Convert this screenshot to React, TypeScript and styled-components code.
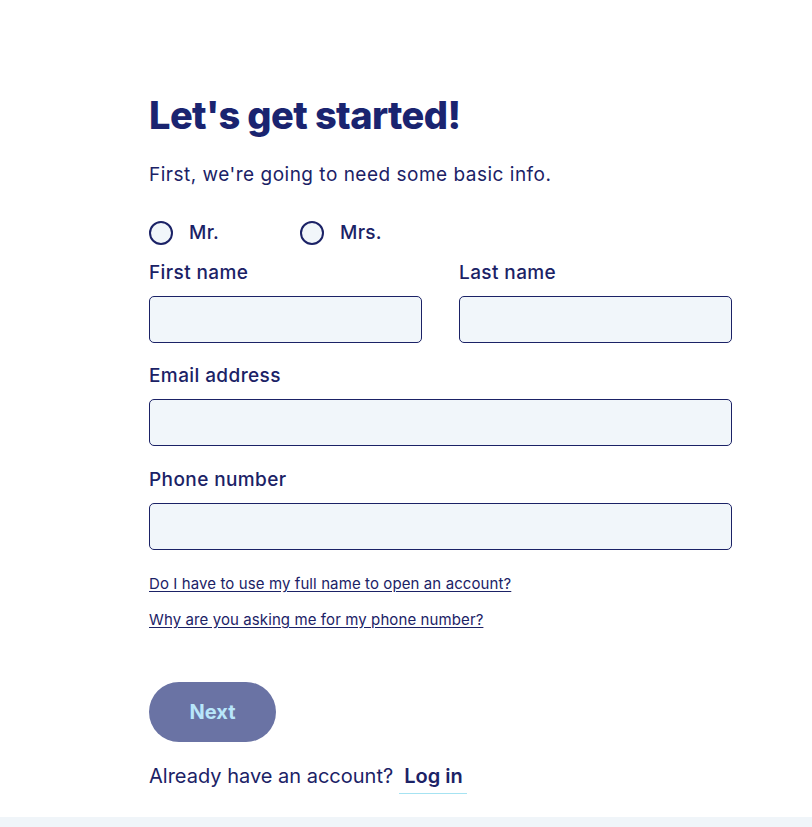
import React, { useState } from "react";
import styled, { createGlobalStyle } from "styled-components";

const GlobalStyle = createGlobalStyle`
  html, body {
    margin: 0;
    padding: 0;
    background: #ffffff;
  }
  body {
    font-family: "Inter", "Liberation Sans", sans-serif;
    color: #1b2266;
  }
`;

const App = () => {
  const [title, setTitle] = useState("");

  return (
    <>
      <GlobalStyle />
      <Page>
        <Form>
          <Heading>Let's get started!</Heading>
          <Intro>First, we're going to need some basic info.</Intro>

          <RadioRow>
            <RadioLabel $width={151}>
              <RadioCircle $checked={title === "mr"} onClick={() => setTitle("mr")} />
              Mr.
            </RadioLabel>
            <RadioLabel>
              <RadioCircle $checked={title === "mrs"} onClick={() => setTitle("mrs")} />
              Mrs.
            </RadioLabel>
          </RadioRow>

          <TwoCols>
            <Field>
              <Label>First name</Label>
              <Input />
            </Field>
            <Field>
              <Label>Last name</Label>
              <Input />
            </Field>
          </TwoCols>

          <Field $gap={20}>
            <Label>Email address</Label>
            <Input />
          </Field>

          <Field $gap={21}>
            <Label>Phone number</Label>
            <Input />
          </Field>

          <Links>
            <HelpLink href="#">Do I have to use my full name to open an account?</HelpLink>
            <HelpLink href="#">Why are you asking me for my phone number?</HelpLink>
          </Links>

          <NextButton>Next</NextButton>

          <LoginRow>
            Already have an account?
            <LoginLink href="#">Log in</LoginLink>
          </LoginRow>
        </Form>
        <BottomBand />
      </Page>
    </>
  );
};

const Page = styled.div`
  width: 100%;
  min-height: 827px;
  display: flex;
  flex-direction: column;
`;

const Form = styled.div`
  width: 583px;
  padding: 92px 0 0 149px;
  display: flex;
  flex-direction: column;
  flex: 1;
`;

const Heading = styled.h1`
  margin: 0;
  font-size: 38px;
  line-height: 46px;
  font-weight: 800;
  letter-spacing: -0.6px;
  color: #1a2470;
`;

const Intro = styled.p`
  margin: 24px 0 0;
  font-size: 19px;
  line-height: 26px;
  font-weight: 400;
  letter-spacing: 0.5px;
  color: #1b2266;
`;

const RadioRow = styled.div`
  display: flex;
  align-items: center;
  margin-top: 32px;
`;

const RadioLabel = styled.label<{ $width?: number }>`
  display: flex;
  align-items: center;
  gap: 16px;
  width: ${(p) => (p.$width ? `${p.$width}px` : "auto")};
  font-size: 19px;
  font-weight: 500;
  line-height: 26px;
  letter-spacing: 0.3px;
  color: #1b2266;
  cursor: pointer;
`;

const RadioCircle = styled.span<{ $checked: boolean }>`
  width: 20px;
  height: 20px;
  border-radius: 50%;
  border: 2px solid #1b2266;
  background: ${(p) => (p.$checked ? "#1b2266" : "#f1f6fa")};
  box-shadow: ${(p) => (p.$checked ? "inset 0 0 0 4px #f1f6fa" : "none")};
`;

const TwoCols = styled.div`
  display: grid;
  grid-template-columns: 1fr 1fr;
  column-gap: 37px;
`;

const Field = styled.div<{ $gap?: number }>`
  display: flex;
  flex-direction: column;
  margin-top: ${(p) => p.$gap ?? 14}px;
`;

const Label = styled.div`
  font-size: 19px;
  line-height: 26px;
  font-weight: 500;
  letter-spacing: 0.4px;
  color: #1b2266;
  margin-bottom: 10px;
`;

const Input = styled.input`
  box-sizing: border-box;
  width: 100%;
  height: 47px;
  border: 1px solid #1b2266;
  border-radius: 5px;
  background: #f1f6fa;
  font: inherit;
  font-size: 18px;
  padding: 0 14px;
  color: #1b2266;
  outline: none;
`;

const Links = styled.div`
  display: flex;
  flex-direction: column;
  align-items: flex-start;
  gap: 16px;
  margin-top: 24px;
`;

const HelpLink = styled.a`
  font-size: 15px;
  line-height: 20px;
  letter-spacing: 0.1px;
  color: #1b2266;
  text-decoration: underline;
  text-underline-offset: 2px;
`;

const NextButton = styled.button`
  align-self: flex-start;
  margin-top: 52px;
  width: 127px;
  height: 60px;
  border: none;
  border-radius: 30px;
  background: #6a73a4;
  color: #b8e6fa;
  font-family: inherit;
  font-size: 20px;
  font-weight: 700;
  cursor: pointer;
`;

const LoginRow = styled.div`
  display: flex;
  align-items: baseline;
  gap: 6px;
  margin-top: 20px;
  font-size: 20px;
  line-height: 28px;
  color: #1b2266;
`;

const LoginLink = styled.a`
  font-weight: 600;
  color: #1b2266;
  text-decoration: none;
  padding: 0 4px 3px 5px;
  border-bottom: 1px solid #a6e3f2;
`;

const BottomBand = styled.div`
  height: 10px;
  background: #f0f5f9;
`;

export default App;
